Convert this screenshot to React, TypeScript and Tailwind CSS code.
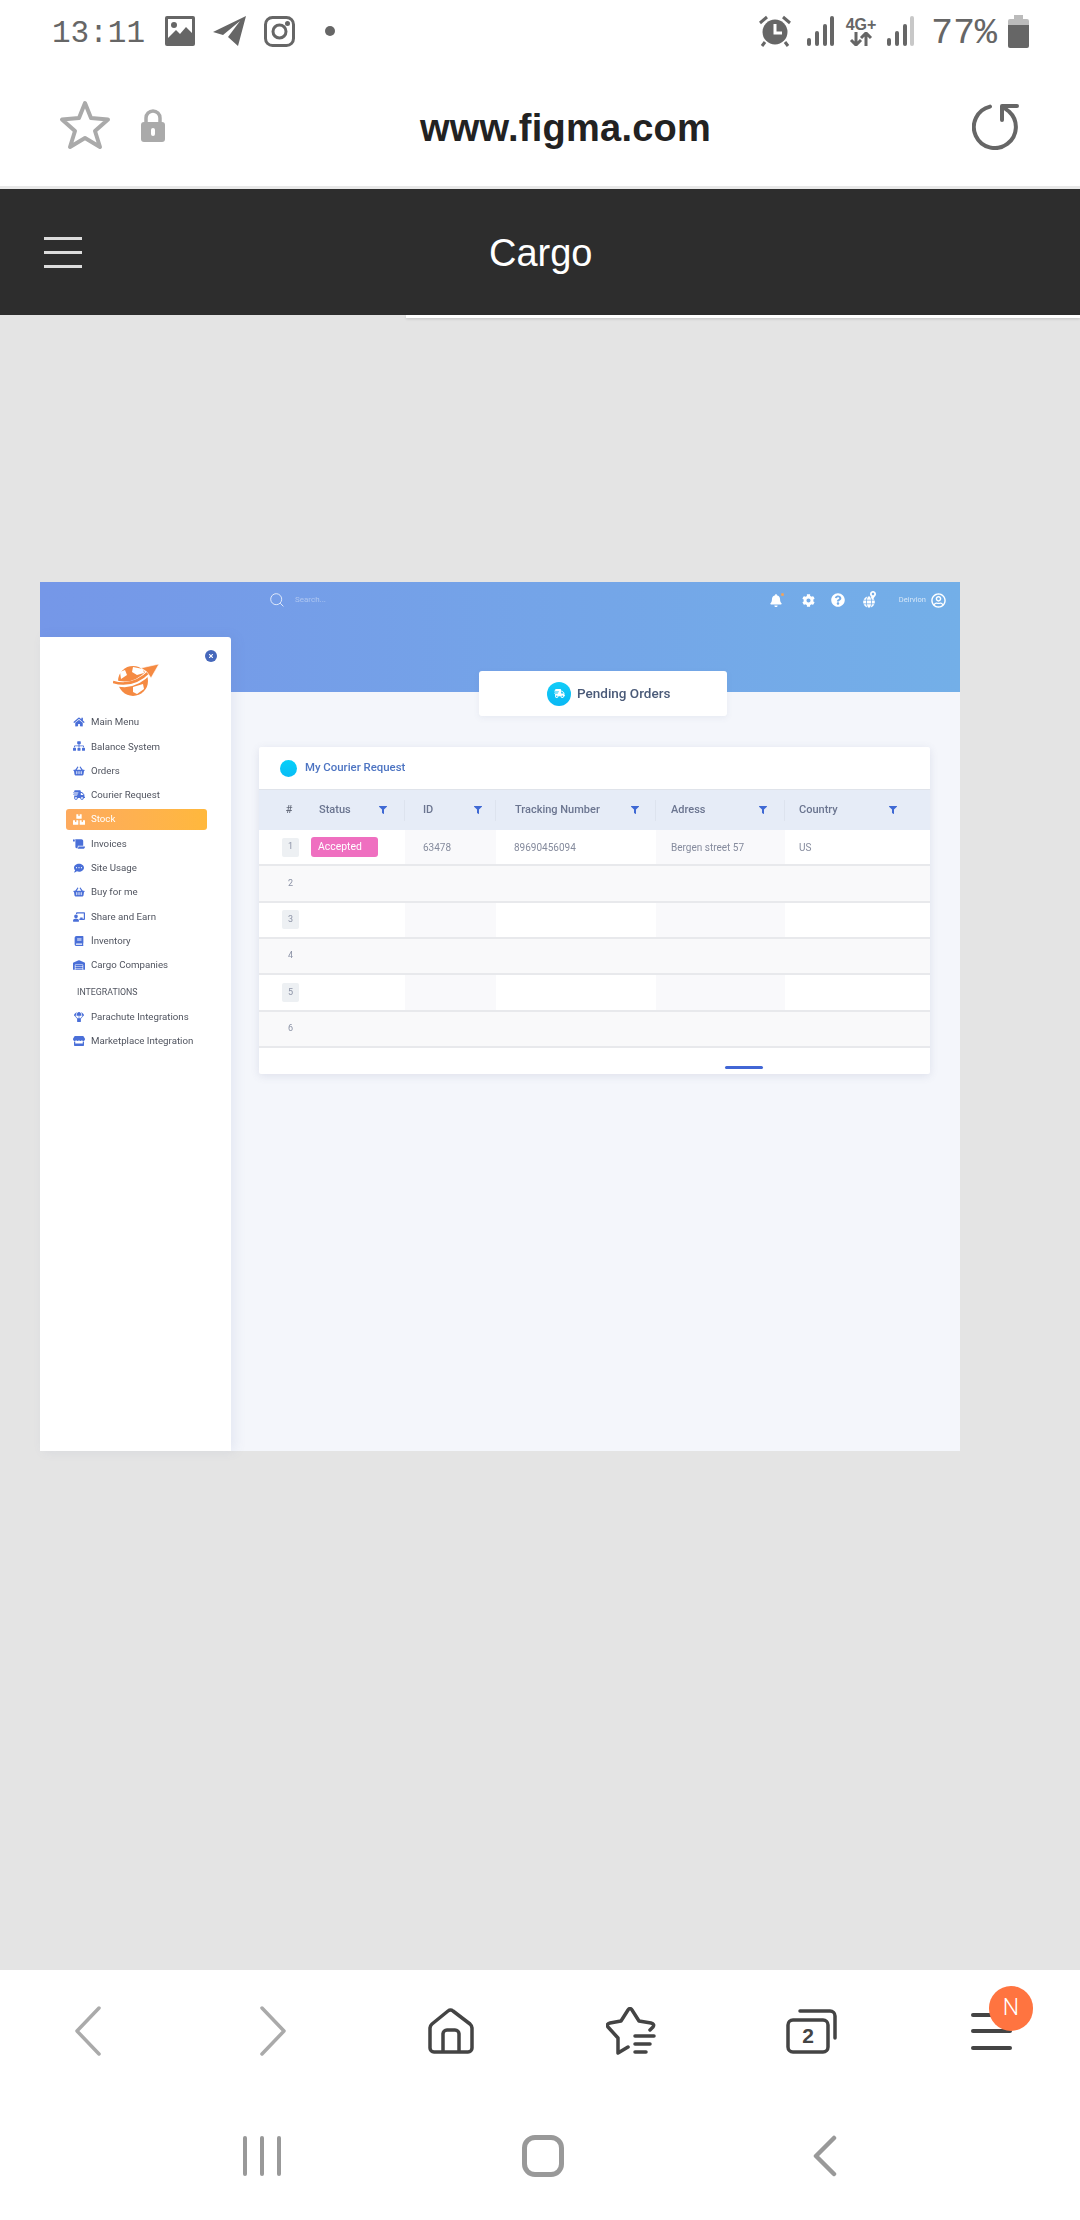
import React from "react";
import {
  FaHome, FaSitemap, FaShoppingBasket, FaShippingFast, FaBoxes, FaScroll, FaCommentDots, FaChalkboardTeacher,
  FaBook, FaWarehouse, FaParachuteBox, FaStore, FaBell, FaCog, FaQuestionCircle, FaGlobe, FaMapMarkerAlt, FaRegUserCircle,
  FaFilter, FaTimes,
} from "react-icons/fa";

const menu = [
  { label: "Main Menu", Icon: FaHome },
  { label: "Balance System", Icon: FaSitemap },
  { label: "Orders", Icon: FaShoppingBasket },
  { label: "Courier Request", Icon: FaShippingFast },
  { label: "Stock", Icon: FaBoxes, active: true },
  { label: "Invoices", Icon: FaScroll },
  { label: "Site Usage", Icon: FaCommentDots },
  { label: "Buy for me", Icon: FaShoppingBasket },
  { label: "Share and Earn", Icon: FaChalkboardTeacher },
  { label: "İnventory", Icon: FaBook },
  { label: "Cargo Companies", Icon: FaWarehouse },
];
const integrations = [
  { label: "Parachute Integrations", Icon: FaParachuteBox },
  { label: "Marketplace Integration", Icon: FaStore },
];
const columns = [
  { label: "Status", cls: "pl-[19px] pr-[17px]" },
  { label: "ID", cls: "pl-[18px] pr-[13px]" },
  { label: "Tracking Number", cls: "pl-[19px] pr-[16px]" },
  { label: "Adress", cls: "pl-[15px] pr-[17px]" },
  { label: "Country", cls: "pl-[14px] pr-[33px]" },
];
const gridCols = "grid grid-cols-[41px_105px_91px_160px_129px_145px]";

function MenuRow({ label, Icon, active }: { label: string; Icon: React.ComponentType<{ className?: string }>; active?: boolean }) {
  return (
    <div className="h-[24.3px] py-[1.5px] ml-[26px] mr-[24px]">
      <div
        className={
          active
            ? "h-full flex items-center gap-[6px] px-[7px] rounded-[3px] bg-gradient-to-r from-[#fdaa5e] to-[#ffb83c] text-white"
            : "h-full flex items-center gap-[6px] px-[7px] text-[#50545f]"
        }
      >
        <Icon className={active ? "w-[12px] h-[11px] text-white" : "w-[12px] h-[10px] text-[#4a6fd8]"} />
        <span className="text-[9.7px] leading-none whitespace-nowrap">{label}</span>
      </div>
    </div>
  );
}

function Sidebar() {
  return (
    <aside className="absolute left-0 top-[55px] w-[191px] h-[814px] bg-white rounded-tr-[3px] shadow-[4px_0_12px_rgba(90,110,170,0.10)] flex flex-col pt-[13px] font-['Roboto',sans-serif]">
      <div className="flex justify-end pr-[14px] h-[11px]">
        <span className="w-[12px] h-[12px] rounded-full bg-[#4668bb] flex items-center justify-center">
          <FaTimes className="w-[6px] h-[6px] text-white" />
        </span>
      </div>
      <div className="flex justify-center h-[36px]">
        <svg width="46" height="36" viewBox="0 0 46 36">
          <circle cx="20" cy="20" r="15" fill="#f58a42" />
          <path d="M20 6 L30 8 L31 12 L24 14 L19 11z M20 26 L30 23 L31 28 L24 33 L20 31z M7 11 L12 9 L14 14 L8 18z" fill="#fff" />
          <path d="M0 21 Q20 29 37 10" fill="none" stroke="#fff" strokeWidth="5.5" />
          <path d="M0 21 Q20 27 37 10" fill="none" stroke="#f58a42" strokeWidth="2.6" />
          <path d="M46 3 L28 7 L34 11 L38 17z" fill="#f58a42" stroke="#fff" strokeWidth="0.6" />
        </svg>
      </div>
      <div className="mt-[13px] flex flex-col">
        {menu.map((m) => (
          <MenuRow key={m.label} label={m.label} Icon={m.Icon} active={m.active} />
        ))}
      </div>
      <div className="h-[24.3px] mt-[3px] pl-[37px] flex items-center text-[8.8px] text-[#50545f]">INTEGRATIONS</div>
      {integrations.map((m) => (
        <MenuRow key={m.label} label={m.label} Icon={m.Icon} />
      ))}
    </aside>
  );
}

function HeroBar() {
  return (
    <div className="h-[110px] bg-gradient-to-r from-[#7597e8] to-[#73afe8]">
      <div className="h-[36px] flex items-center pl-[230px] pr-[14px]">
        <svg width="14" height="14" viewBox="0 0 14 14" fill="none" stroke="#dfe9fb" strokeWidth="1">
          <circle cx="6.2" cy="6.2" r="5.5" />
          <path d="M10.2 10.2 L13.4 13.4" />
        </svg>
        <span className="ml-[11px] text-[8px] text-white/40">Search...</span>
        <div className="ml-auto flex items-center text-white">
          <span className="relative">
            <FaBell className="w-[12px] h-[13px]" />
            <span className="absolute -top-[1px] -right-[2px] w-[3px] h-[3px] rounded-full bg-[#f0a35e]" />
          </span>
          <FaCog className="w-[13px] h-[13px] ml-[20px]" />
          <FaQuestionCircle className="w-[14px] h-[14px] ml-[16px]" />
          <span className="relative ml-[18px]">
            <FaGlobe className="w-[12px] h-[12px] mt-[3px]" />
            <FaMapMarkerAlt className="absolute -top-[2px] left-[7px] w-[6px] h-[8px]" />
          </span>
          <span className="ml-[24px] text-[7.5px] text-white/70">Deirvion</span>
          <FaRegUserCircle className="w-[15px] h-[15px] ml-[5px]" />
        </div>
      </div>
    </div>
  );
}

function Table() {
  return (
    <div className="ml-[219px] mt-[31px] w-[671px] h-[327px] bg-white rounded-[2px] shadow-[0_2px_8px_rgba(90,100,140,0.14)] flex flex-col">
      <div className="h-[42px] flex items-center pl-[21px] gap-[8px]">
        <span className="w-[17px] h-[17px] rounded-full bg-gradient-to-b from-[#05d0f9] to-[#0abcf5]" />
        <span className="text-[11.4px] font-medium text-[#4d74c2]">My Courier Request</span>
      </div>
      <div className={`${gridCols} h-[41px] bg-[#e6ecf7] border-t border-[#dfe3ea] items-center`}>
        <span className="text-center pl-[19px] text-[11px] font-medium text-[#666c7c]">#</span>
        {columns.map((c, i) => (
          <div
            key={c.label}
            className={`${c.cls} h-[21px] flex items-center justify-between ${i < 4 ? "border-r border-[#dde3ee]" : ""}`}
          >
            <span className="text-[11px] font-medium text-[#6b7590] whitespace-nowrap">{c.label}</span>
            <FaFilter className="w-[8px] h-[8px] text-[#3f69d4]" />
          </div>
        ))}
      </div>
      {[1, 2, 3, 4, 5, 6].map((n) => {
        const odd = n % 2 === 1;
        return (
          <div
            key={n}
            className={`${gridCols} h-[36.33px] border-b-2 border-[#e8e9ec] ${odd ? "bg-white" : "bg-[#f9f9fa]"}`}
          >
            <div className="pl-[23px] flex items-center">
              {odd ? (
                <span className="w-[17px] h-[19px] rounded-[2px] bg-[#edf0f3] flex items-center justify-center text-[9px] text-[#8b92a5]">
                  {n}
                </span>
              ) : (
                <span className="w-[17px] text-center text-[9px] text-[#8b92a5]">{n}</span>
              )}
            </div>
            <div className="pl-[11px] flex items-center">
              {n === 1 && (
                <span className="w-[67px] h-[20px] pl-[7px] rounded-[3px] bg-[#ef6fc0] text-white text-[10.4px] flex items-center">
                  Accepted
                </span>
              )}
            </div>
            <div className={`pl-[18px] flex items-center text-[10px] text-[#858b9d] ${odd ? "bg-[#f9f9fb]" : ""}`}>
              {n === 1 && "63478"}
            </div>
            <div className="pl-[18px] flex items-center text-[10px] text-[#858b9d]">{n === 1 && "89690456094"}</div>
            <div className={`pl-[15px] flex items-center text-[10px] text-[#858b9d] ${odd ? "bg-[#f9f9fb]" : ""}`}>
              {n === 1 && "Bergen street 57"}
            </div>
            <div className="pl-[14px] flex items-center text-[10px] text-[#858b9d]">{n === 1 && "US"}</div>
          </div>
        );
      })}
      <div className="flex-1 pl-[466px] pt-[18px]">
        <div className="w-[38px] h-[3px] rounded-full bg-[#4166d5]" />
      </div>
    </div>
  );
}

function Frame() {
  return (
    <div className="relative w-[920px] h-[869px] bg-[#f4f6fb] font-['Roboto',sans-serif] blur-[0.4px]">
      <HeroBar />
      <Sidebar />
      <div className="relative -mt-[21px]">
        <div className="ml-[439px] w-[248px] h-[45px] bg-white rounded-[3px] shadow-[0_2px_6px_rgba(90,100,140,0.08)] flex items-center pl-[68px] gap-[6px]">
          <span className="w-[24px] h-[24px] rounded-full bg-gradient-to-b from-[#12cdf8] to-[#0ab8f4] flex items-center justify-center">
            <FaShippingFast className="w-[11px] h-[9px] text-white" />
          </span>
          <span className="text-[13.5px] font-medium text-[#4a5a78] whitespace-nowrap">Pending Orders</span>
        </div>
        <Table />
      </div>
    </div>
  );
}

function StatusBar() {
  return (
    <div className="h-[62px] flex items-center pl-[52px] pr-[51px] text-[#666]">
      <span className="font-['Liberation_Mono',monospace] text-[31px] leading-none w-[93px] mt-[4px] whitespace-nowrap">13:11</span>
      <svg className="ml-[20px]" width="30" height="30" viewBox="0 0 30 30">
        <rect width="30" height="30" rx="2" fill="#666" />
        <rect x="3" y="3" width="24" height="19" fill="#fff" />
        <circle cx="9" cy="9" r="3" fill="#666" />
        <path d="M3 22 L11 14 L15 18 L21 11 L27 17 V22z" fill="#666" />
      </svg>
      <svg className="ml-[18px]" width="34" height="30" viewBox="0 0 34 30">
        <path d="M0 16 L33 0 L25 30 L15 21 L27 5 L10 19z" fill="#666" />
      </svg>
      <svg className="ml-[17px]" width="31" height="31" viewBox="0 0 31 31" fill="none" stroke="#666" strokeWidth="3">
        <rect x="1.5" y="1.5" width="28" height="28" rx="7" />
        <circle cx="15.5" cy="15.5" r="6.5" />
        <circle cx="23.5" cy="7.5" r="1" fill="#666" />
      </svg>
      <span className="ml-[30px] w-[10px] h-[10px] rounded-full bg-[#666]" />
      <div className="ml-auto flex items-center">
        <svg width="34" height="32" viewBox="0 0 34 32">
          <circle cx="17" cy="17" r="12.5" fill="#666" />
          <path d="M17 9 V18 H24" fill="none" stroke="#fff" strokeWidth="3" />
          <path d="M2 8 L9 2 M32 8 L25 2 M7 27 L4 31 M27 27 L30 31" stroke="#666" strokeWidth="3" />
        </svg>
        <svg className="ml-[15px]" width="27" height="30" viewBox="0 0 27 30" fill="#666">
          <rect x="0" y="22" width="4" height="8" rx="2" />
          <rect x="8" y="15" width="4" height="15" rx="2" />
          <rect x="16" y="8" width="4" height="22" rx="2" />
          <rect x="23" y="0" width="4" height="30" rx="2" />
        </svg>
        <div className="ml-[11px] w-[32px] flex flex-col items-center leading-none font-['Liberation_Sans',sans-serif] font-bold">
          <span className="text-[16px] leading-[15px]">4G+</span>
          <svg width="24" height="14" viewBox="0 0 24 14" fill="none" stroke="#666" strokeWidth="3">
            <path d="M7 0 V12 M2 8 L7 13 L12 8 M17 14 V2 M12 6 L17 1 L22 6" />
          </svg>
        </div>
        <svg className="ml-[10px]" width="27" height="30" viewBox="0 0 27 30" fill="#666">
          <rect x="0" y="22" width="4" height="8" rx="2" />
          <rect x="8" y="15" width="4" height="15" rx="2" />
          <rect x="16" y="8" width="4" height="22" rx="2" />
          <rect x="23" y="0" width="4" height="30" rx="2" fill="#c8c8c8" />
        </svg>
        <span className="ml-[17px] w-[66px] mt-[5px] font-['Liberation_Mono',monospace] text-[37px] tracking-[-0.3px] leading-none whitespace-nowrap">77%</span>
        <svg className="ml-[11px]" width="21" height="33" viewBox="0 0 21 33">
          <path d="M6 0 H15 V4 H19 Q21 4 21 6 V10 H0 V6 Q0 4 2 4 H6z" fill="#bbb" />
          <path d="M0 10 H21 V31 Q21 33 19 33 H2 Q0 33 0 31z" fill="#666" />
        </svg>
      </div>
    </div>
  );
}

function AddressBar() {
  return (
    <div className="h-[124px] flex items-center">
      <svg className="ml-[59px] mt-[2px]" width="52" height="50" viewBox="0 0 52 50" fill="none" stroke="#aaa" strokeWidth="4" strokeLinejoin="round">
        <path d="M26 3 L32 18 L49 19.5 L36 31 L41 47 L26 38 L11 47 L16 31 L3 19.5 L20 18z" />
      </svg>
      <svg className="ml-[29px] mt-[4px]" width="26" height="34" viewBox="0 0 26 34">
        <path d="M6 15 V9 a7 7 0 0 1 14 0 V15" fill="none" stroke="#aaa" strokeWidth="3.5" />
        <rect x="1" y="13" width="24" height="20" rx="3" fill="#aaa" />
        <rect x="11" y="19" width="4" height="8" rx="2" fill="#fff" />
      </svg>
      <span className="ml-[254px] mt-[7px] font-['Liberation_Sans',sans-serif] font-bold text-[38px] tracking-[0.25px] leading-none text-[#222] whitespace-nowrap">
        www.figma.com
      </span>
      <svg className="ml-auto mr-[60px] mt-[6px]" width="48" height="46" viewBox="0 0 48 46" fill="none" stroke="#666" strokeWidth="4" strokeLinecap="round" strokeLinejoin="round">
        <path d="M18 2.6 A21 21 0 1 0 37 7.5 L31 3" />
        <path d="M45 2 H30 V16" />
      </svg>
    </div>
  );
}

function BottomBar() {
  return (
    <div className="h-[250px] bg-white flex flex-col">
      <div className="h-[122px] flex items-center">
        <svg className="ml-[74px]" width="28" height="50" viewBox="0 0 28 50" fill="none" stroke="#aaa" strokeWidth="3.5" strokeLinecap="round" strokeLinejoin="round">
          <path d="M25 2 L3 25 L25 48" />
        </svg>
        <svg className="ml-[157px]" width="28" height="50" viewBox="0 0 28 50" fill="none" stroke="#aaa" strokeWidth="3.5" strokeLinecap="round" strokeLinejoin="round">
          <path d="M3 2 L25 25 L3 48" />
        </svg>
        <svg className="ml-[141px]" width="46" height="46" viewBox="0 0 46 46" fill="none" stroke="#444" strokeWidth="3.5" strokeLinejoin="round">
          <path d="M15 44 H6 a4 4 0 0 1 -4 -4 V20 a6 6 0 0 1 2 -4 L20 3 a4 4 0 0 1 5 0 L42 16 a6 6 0 0 1 2 4 V40 a4 4 0 0 1 -4 4 H15" />
          <path d="M15 44 V26 a4 4 0 0 1 4 -4 h8 a4 4 0 0 1 4 4 V44" />
        </svg>
        <svg className="ml-[132px]" width="50" height="48" viewBox="0 0 50 48" fill="none" stroke="#444" strokeWidth="3.5" strokeLinecap="round" strokeLinejoin="round">
          <path d="M22 40 L12 46 L12 31 L2 20 Q0 17 4 16 L15 14 L22 3 Q24 0 26 3 L33 14 L45 16 Q49 17 47 20 L44 23" />
          <path d="M29 29 H48 M29 37 H44 M29 45 H40" />
        </svg>
        <svg className="ml-[130px]" width="52" height="46" viewBox="0 0 52 46" fill="none" stroke="#444" strokeWidth="3.5" strokeLinecap="round">
          <rect x="2" y="12" width="40" height="32" rx="5" />
          <path d="M14 3 H44 a5 5 0 0 1 5 5 V30" />
          <text x="22" y="35" textAnchor="middle" fontFamily="'Liberation Sans',sans-serif" fontWeight="700" fontSize="21" fill="#444" stroke="none">2</text>
        </svg>
        <div className="relative ml-[133px] w-[41px] h-[37px] flex flex-col justify-between">
          <span className="h-[4px] rounded-full bg-[#444]" />
          <span className="h-[4px] rounded-full bg-[#444]" />
          <span className="h-[4px] rounded-full bg-[#444]" />
          <span className="absolute left-[18px] -top-[27px] w-[44px] h-[45px] rounded-full bg-[#ff7440] flex items-center justify-center text-white text-[23px] font-['Roboto',sans-serif] font-light">
            N
          </span>
        </div>
      </div>
      <div className="h-[128px] flex items-center">
        <div className="ml-[243px] w-[38px] h-[40px] flex justify-between">
          <span className="w-[4px] rounded-full bg-[#999]" />
          <span className="w-[4px] rounded-full bg-[#999]" />
          <span className="w-[4px] rounded-full bg-[#999]" />
        </div>
        <span className="ml-[241px] w-[42px] h-[42px] rounded-[13px] border-[5px] border-[#999]" />
        <svg className="ml-[249px]" width="24" height="42" viewBox="0 0 24 42" fill="none" stroke="#999" strokeWidth="4.5" strokeLinecap="round" strokeLinejoin="round">
          <path d="M21 3 L3 21 L21 39" />
        </svg>
      </div>
    </div>
  );
}

export default function App() {
  return (
    <div className="w-[1080px] h-[2220px] bg-[#e4e4e4] flex flex-col overflow-hidden font-['Roboto',sans-serif]">
      <div className="bg-white">
        <StatusBar />
        <AddressBar />
      </div>
      <div className="h-[3px] bg-[#e8e8e8]" />
      <div className="h-[126px] bg-[#2d2d2d] flex items-center pl-[44px]">
        <div className="w-[38px] h-[31px] flex flex-col justify-between">
          <span className="h-[3px] bg-[#dcdcdc]" />
          <span className="h-[3px] bg-[#dcdcdc]" />
          <span className="h-[3px] bg-[#dcdcdc]" />
        </div>
        <span className="ml-[407px] mt-[2px] text-[38px] leading-none text-white font-['Liberation_Sans',sans-serif]">Cargo</span>
      </div>
      <div className="ml-[406px] h-[3px] bg-white shadow-[0_1px_3px_rgba(0,0,0,0.15)]" />
      <div className="flex-1 pl-[40px] pt-[264px]">
        <Frame />
      </div>
      <BottomBar />
    </div>
  );
}
